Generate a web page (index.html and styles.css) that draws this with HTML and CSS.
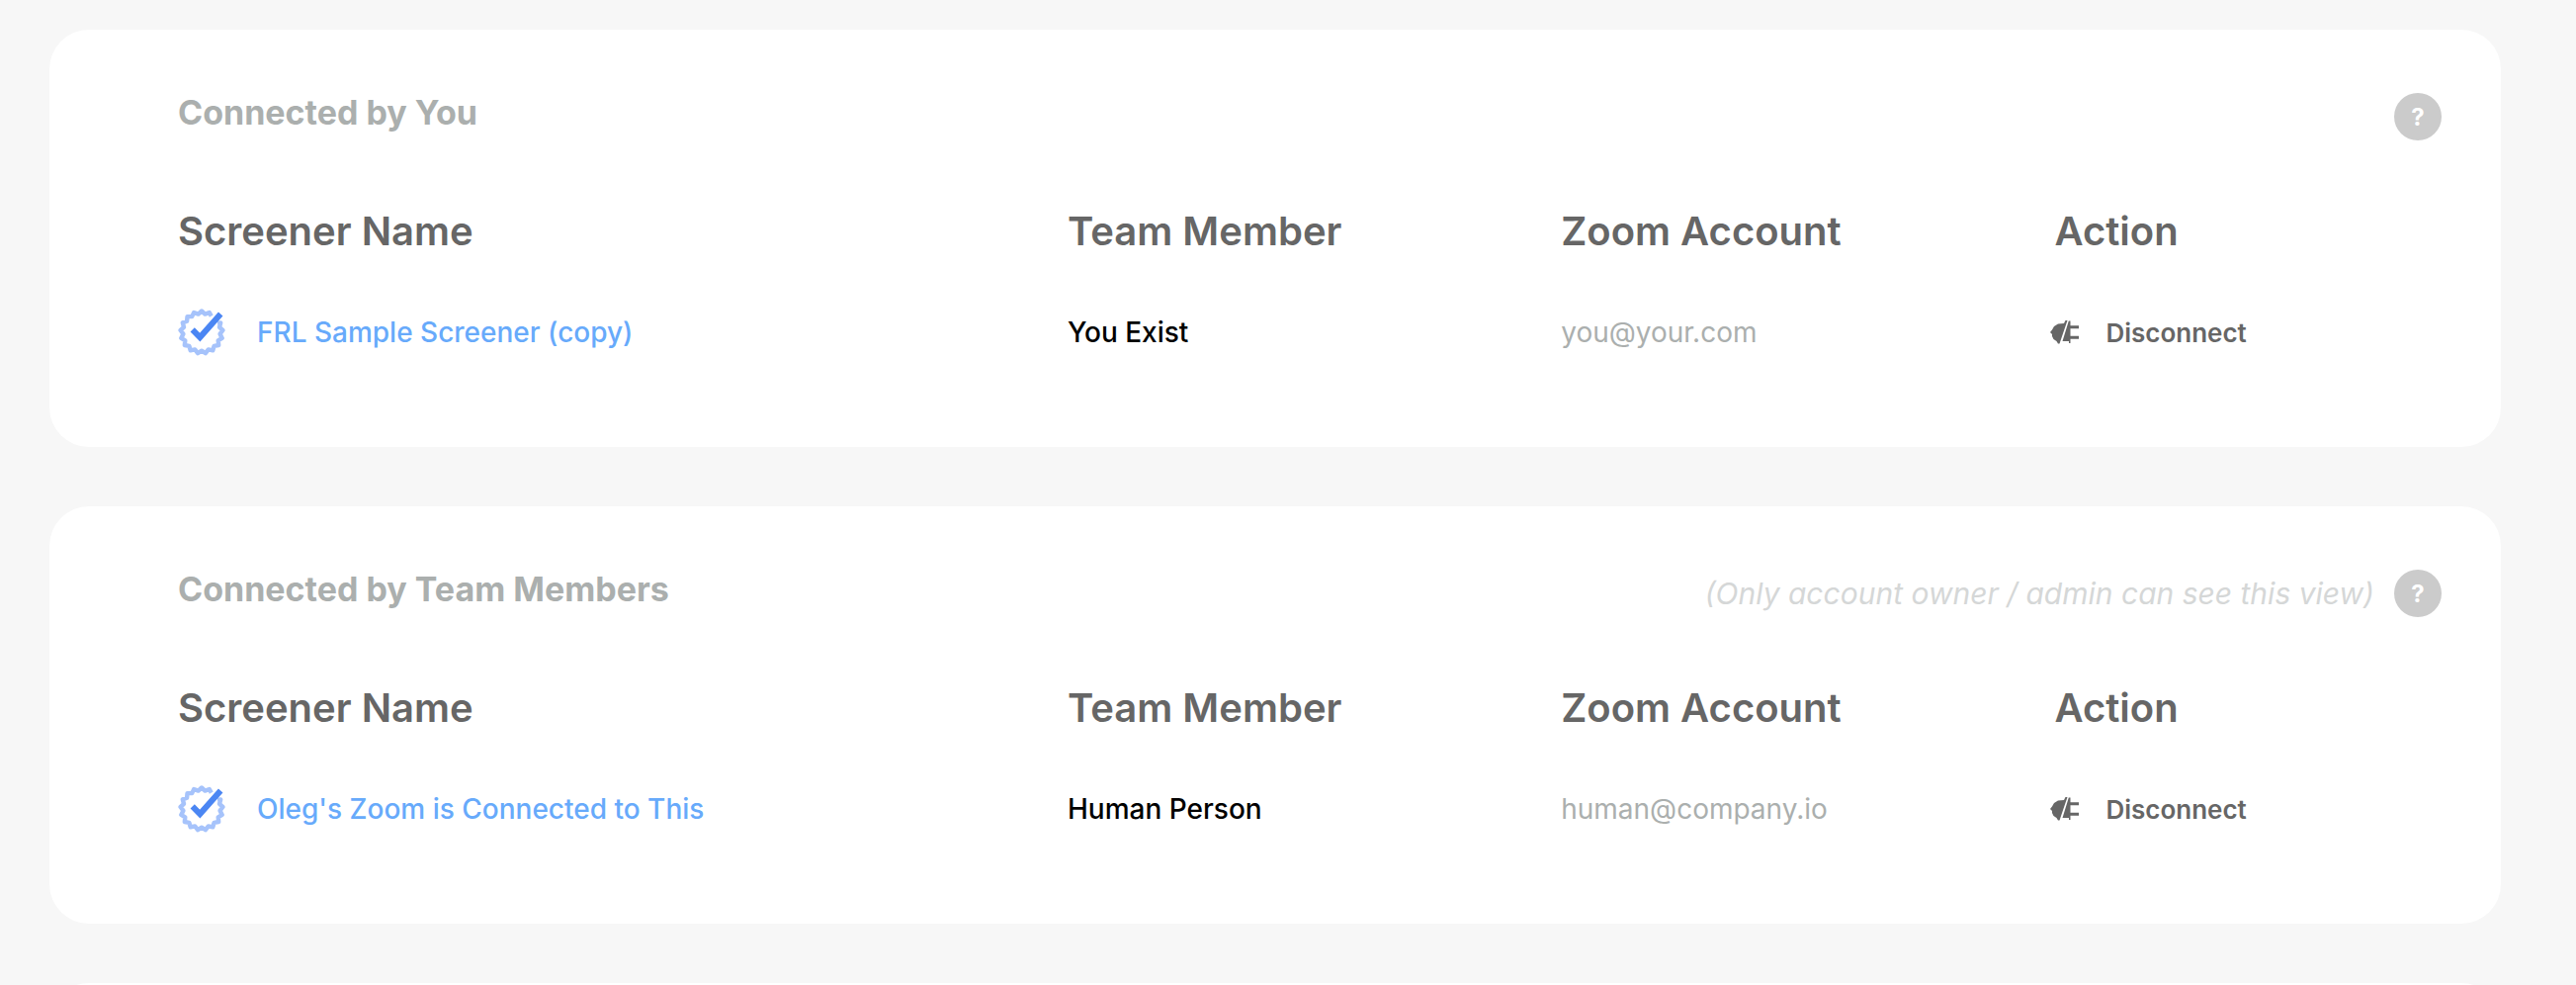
FILE: index.html
```html
<!DOCTYPE html>
<html lang="en">
<head>
  <meta charset="UTF-8" />
  <title>Zoom Connections</title>
  <meta name="viewport" content="width=device-width, initial-scale=1" />
  <link rel="stylesheet" href="styles.css">
</head>
<body>
  <!-- Shared icons -->
  <svg class="icon-defs" aria-hidden="true">
    <symbol id="icon-verified" viewBox="0 0 48 48">
      <path d="M40 15L43.2 14.4L42 18.9L45.4 22L42.6 25.7L44.7 29.9L40.7 32.3L41.2 37L36.6 37.8L35.3 42.3L30.8 41.4L27.9 45.1L24 42.7L20.1 45.1L17.2 41.4L12.7 42.3L11.4 37.8L6.8 37L7.3 32.3L3.3 29.9L5.4 25.7L2.6 22L6 18.9L4.8 14.4L9.1 12.7L9.5 8.1L14.2 8.1L16.2 4L20.6 5.6L24 2.5L27.4 5.6L31.8 4L33.8 7.6" fill="none" stroke="#a6c3fb" stroke-width="4.400" stroke-linejoin="round" />
      <path d="M14.7 21.3L22.3 29L43.2 5.5" fill="none" stroke="#4b86f3" stroke-width="6" />
    </symbol>
    <symbol id="icon-unplug" viewBox="0 0 30 24">
      <path d="M0 12L2 9.500L4 6L8 3.500L14 3L15.500 0H17.500L9.500 23.500H8L6.500 21L3.500 19L2 16V14Z" />
      <path d="M18.800 0.500H20.500V5.300H29V8.300H20.500V15.800H29V18.800H20.500V23H19V21H12.500Z" />
    </symbol>
  </svg>

  <main class="page">
    <!-- Connected by You -->
    <section class="card">
      <div class="card-header">
        <h2>Connected by You</h2>
        <button type="button" class="help" aria-label="Help">?</button>
      </div>
      <table class="connections">
        <thead>
          <tr>
            <th class="col-name">Screener Name</th>
            <th class="col-member">Team Member</th>
            <th class="col-account">Zoom Account</th>
            <th>Action</th>
          </tr>
        </thead>
        <tbody>
          <tr>
            <td>
              <a href="#" class="screener"><svg class="verified"><use href="#icon-verified" /></svg>FRL Sample Screener (copy)</a>
            </td>
            <td>You Exist</td>
            <td class="email">you@your.com</td>
            <td>
              <button type="button" class="disconnect"><svg class="unplug"><use href="#icon-unplug" /></svg>Disconnect</button>
            </td>
          </tr>
        </tbody>
      </table>
    </section>

    <!-- Connected by Team Members -->
    <section class="card">
      <div class="card-header">
        <h2>Connected by Team Members</h2>
        <span class="note">(Only account owner / admin can see this view)</span>
        <button type="button" class="help" aria-label="Help">?</button>
      </div>
      <table class="connections">
        <thead>
          <tr>
            <th class="col-name">Screener Name</th>
            <th class="col-member">Team Member</th>
            <th class="col-account">Zoom Account</th>
            <th>Action</th>
          </tr>
        </thead>
        <tbody>
          <tr>
            <td>
              <a href="#" class="screener"><svg class="verified"><use href="#icon-verified" /></svg>Oleg's Zoom is Connected to This</a>
            </td>
            <td>Human Person</td>
            <td class="email">human@company.io</td>
            <td>
              <button type="button" class="disconnect"><svg class="unplug"><use href="#icon-unplug" /></svg>Disconnect</button>
            </td>
          </tr>
        </tbody>
      </table>
    </section>

    <section class="card"></section>
  </main>
</body>
</html>
```
FILE: styles.css
```css
* {
  box-sizing: border-box;
}
body {
  margin: 0;
  font-family: Inter, sans-serif;
  background: #f7f7f7;
  color: #000;
}
.icon-defs {
  display: none;
}
.page {
  height: 100vh;
  overflow: hidden;
  padding: 30px 76px 0 50px;
}
.card {
  background: #fff;
  border-radius: 40px;
  padding: 60px 60px 92px 130px;
  margin-bottom: 60px;
}
.card-header {
  display: flex;
  align-items: flex-start;
  gap: 20px;
  height: 56px;
}
h2 {
  margin: 0 auto 0 0;
  font-size: 34px;
  line-height: 48px;
  font-weight: 700;
  color: #abafae;
}
.note {
  margin-top: 4px;
  font-size: 30px;
  line-height: 48px;
  font-style: italic;
  font-weight: 400;
  color: #d5d7d7;
}
.help {
  width: 48px;
  height: 48px;
  margin-top: 4px;
  padding: 0;
  border: none;
  border-radius: 50%;
  background: #cbcbcb;
  color: #fff;
  font-family: inherit;
  font-size: 24px;
  font-weight: 700;
  cursor: pointer;
}
.connections {
  width: 100%;
  margin-top: 50px;
  table-layout: fixed;
  border-collapse: collapse;
  text-align: left;
}
.connections th {
  padding: 0 0 40px;
  font-size: 40px;
  line-height: 76px;
  font-weight: 600;
  color: #666;
}
.connections td {
  padding: 0;
  font-size: 28px;
  line-height: 48px;
  font-weight: 500;
}
.col-name {
  width: 39.3%;
}
.col-member,
.col-account {
  width: 21.8%;
}
.screener {
  display: flex;
  align-items: center;
  gap: 32px;
  color: #67aafb;
  text-decoration: none;
}
.screener:hover {
  text-decoration: underline;
}
.verified {
  width: 48px;
  height: 48px;
}
.connections .email {
  font-weight: 400;
  color: #abafae;
}
.disconnect {
  display: flex;
  align-items: center;
  gap: 26px;
  margin-left: -4px;
  padding: 0;
  border: none;
  background: none;
  color: #666;
  font-family: inherit;
  font-size: 26px;
  font-weight: 600;
  cursor: pointer;
}
.unplug {
  width: 30px;
  height: 24px;
  fill: currentColor;
}
```
